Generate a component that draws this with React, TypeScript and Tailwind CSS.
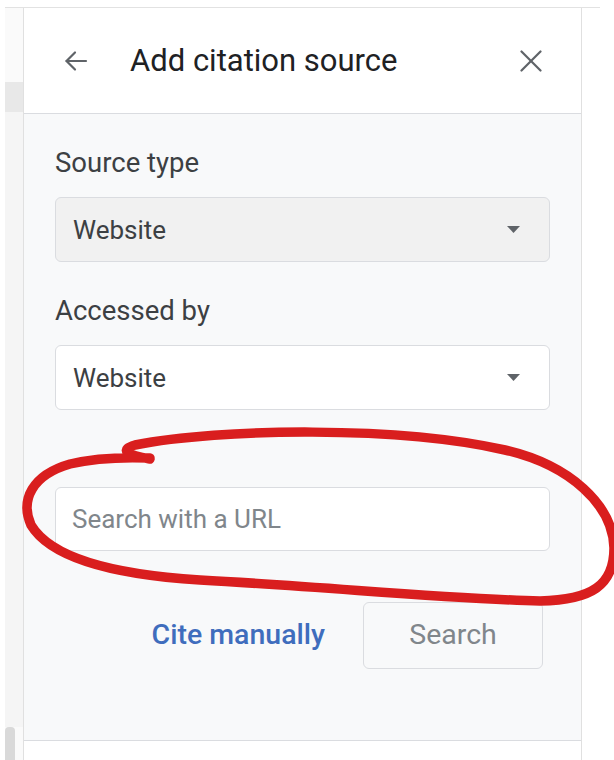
import React from "react";

function ArrowBack() {
  return (
    <svg width="24" height="24" viewBox="0 0 24 24" fill="none" stroke="#5f6368" strokeWidth="2.2" strokeLinecap="round" strokeLinejoin="round">
      <path d="M22 12H2.5" />
      <path d="M11 3.5L2.5 12L11 20.5" />
    </svg>
  );
}

function CloseIcon() {
  return (
    <svg width="22" height="22" viewBox="0 0 22 22" fill="none" stroke="#5f6368" strokeWidth="2.2" strokeLinecap="round">
      <path d="M1.5 1.5L20.5 20.5" />
      <path d="M20.5 1.5L1.5 20.5" />
    </svg>
  );
}

function Caret() {
  return (
    <svg width="13" height="7" viewBox="0 0 13 7">
      <path d="M0 0H13L6.5 7Z" fill="#5f6368" />
    </svg>
  );
}

function SelectBox({ value, disabled }: { value: string; disabled?: boolean }) {
  return (
    <div
      className={`flex h-[65px] items-center justify-between rounded-[6px] border border-[#dadce0] pl-[17px] pr-[29px] ${
        disabled ? "bg-[#f1f1f1]" : "bg-white"
      }`}
    >
      <span className="text-[26px] leading-none text-[#3c4043]">{value}</span>
      <Caret />
    </div>
  );
}

export default function App() {
  return (
    <div className="relative h-[760px] w-[614px] overflow-hidden bg-white font-['Roboto',sans-serif]">
      <div className="h-[7px]" />
      <div className="ml-[5px] mr-[14px] flex h-[753px] border-t border-[#e2e2e2]">
        {/* page edge to the left of the sidebar */}
        <div className="flex w-[18px] flex-col bg-[#fafafa]">
          <div className="h-[74px]" />
          <div className="h-[30px] bg-[#e8e8e8]" />
          <div className="flex-1 bg-[#f5f5f5]" />
          <div className="h-[33px] w-[10px] rounded-t-[4px] bg-[#d9d9d9]" />
        </div>

        {/* sidebar */}
        <div className="flex w-[559px] flex-col border-x border-[#e0e0e0]">
          <div className="flex h-[106px] items-center border-b border-[#dadce0] bg-white">
            <div className="ml-[40px]">
              <ArrowBack />
            </div>
            <span className="ml-[42px] text-[31px] leading-none text-[#202124]">Add citation source</span>
            <div className="ml-auto mr-[39px]">
              <CloseIcon />
            </div>
          </div>

          <div className="flex h-[626px] flex-col bg-[#f8f9fa] px-[31px] pt-[33px]">
            <div className="text-[27.5px] leading-[32px] text-[#3c4043]">Source type</div>
            <div className="mt-[18px]">
              <SelectBox value="Website" disabled />
            </div>

            <div className="mt-[33px] text-[27.5px] leading-[32px] text-[#3c4043]">Accessed by</div>
            <div className="mt-[18px]">
              <SelectBox value="Website" />
            </div>

            <div className="mt-[77px] flex h-[64px] items-center rounded-[6px] border border-[#dadce0] bg-white pl-[16px]">
              <span className="text-[26px] leading-none text-[#80868b]">Search with a URL</span>
            </div>

            <div className="mt-[51px] flex items-center justify-end pr-[7px]">
              <span className="text-[28.5px] font-medium leading-none text-[#3f6dbd]">Cite manually</span>
              <div className="ml-[38px] flex h-[67px] w-[180px] items-center justify-center rounded-[6px] border border-[#dadce0] bg-[#f8f9fa]">
                <span className="text-[28.5px] leading-none text-[#80868b]">Search</span>
              </div>
            </div>
          </div>

          <div className="flex-1 border-t border-[#dadce0] bg-white" />
        </div>

        <div className="flex-1 bg-white" />
      </div>

      {/* hand-drawn red loop around the URL field */}
      <svg className="pointer-events-none absolute left-0 top-0" width="614" height="760" viewBox="0 0 614 760" fill="none">
        <path
          d="M150 459 Q112 452 135 445 C220 428 400 426 505 450 C570 465 613 505 614 548 C614 585 592 600 540 601 C450 599 330 587 200 580 C120 575 52 560 31 525 C20 500 32 475 70 464 C95 458 125 457 150 458"
          stroke="#d91e1e"
          strokeWidth="9.5"
          strokeLinecap="round"
          strokeLinejoin="round"
        />
      </svg>
    </div>
  );
}
